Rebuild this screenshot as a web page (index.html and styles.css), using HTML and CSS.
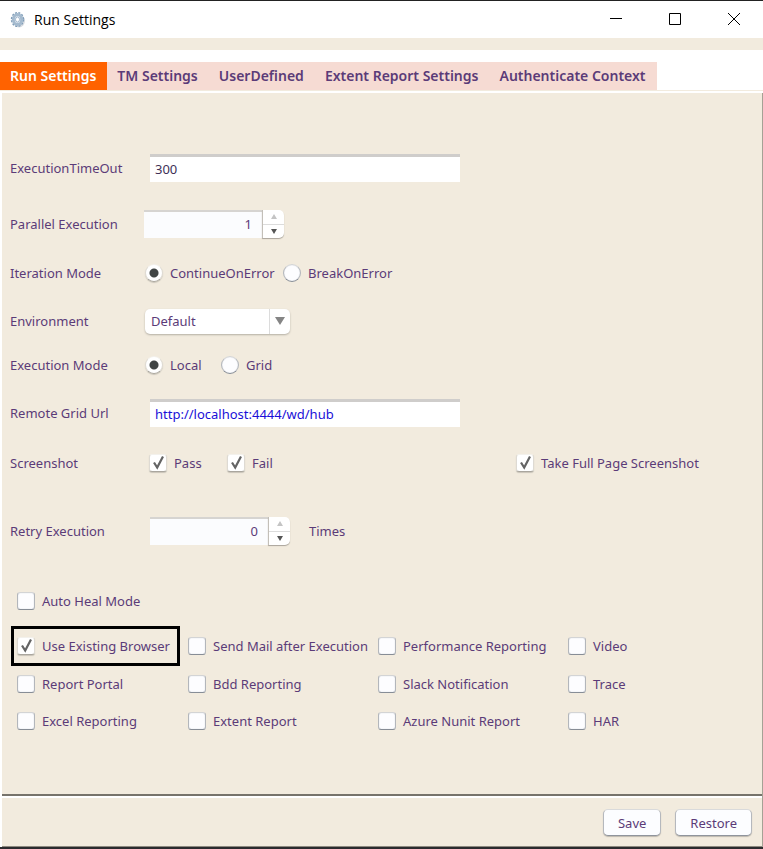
FILE: index.html
```html
<!DOCTYPE html>
<html lang="en">
<head>
<meta charset="utf-8">
<title>Run Settings</title>
<link rel="stylesheet" href="styles.css">
</head>
<body>
<div class="window">
  <header class="titlebar">
    <svg class="gear" viewBox="0 0 16 16" aria-hidden="true">
      <ellipse cx="9" cy="9" rx="6" ry="6.500" fill="#d9dde2"/>
      <ellipse cx="7.500" cy="7.500" rx="6" ry="6.800" fill="none" stroke="#7f9cb8" stroke-width="1.400" stroke-dasharray="2 1.400"/>
      <ellipse cx="7.500" cy="7.500" rx="4.200" ry="5" fill="#e9eff5" stroke="#a4bace" stroke-width="3"/>
      <ellipse cx="7.500" cy="7.500" rx="2" ry="2.600" fill="#fff" stroke="#8ba6c0" stroke-width=".8"/>
    </svg>
    <h1>Run Settings</h1>
    <div class="window-controls">
      <button type="button" aria-label="Minimize"><svg viewBox="0 0 12 12"><path d="M0 5.500h12"/></svg></button>
      <button type="button" aria-label="Maximize"><svg viewBox="0 0 12 12"><path d="M.5.5h11v11H.5z"/></svg></button>
      <button type="button" aria-label="Close"><svg viewBox="0 0 12 12"><path d="M0 0l12 12M12 0L0 12"/></svg></button>
    </div>
  </header>
  <div class="toolbar"></div>
  <nav class="tabs" role="tablist">
    <button type="button" role="tab" class="tab active" aria-selected="true">Run Settings</button>
    <button type="button" role="tab" class="tab">TM Settings</button>
    <button type="button" role="tab" class="tab">UserDefined</button>
    <button type="button" role="tab" class="tab">Extent Report Settings</button>
    <button type="button" role="tab" class="tab">Authenticate Context</button>
  </nav>
  <form class="form">
    <main class="panel">
      <div class="fields">
        <div class="row">
          <label class="name" for="timeout">ExecutionTimeOut</label>
          <input class="text indent" id="timeout" type="text" value="300">
        </div>
        <div class="row">
          <label class="name" for="parallel">Parallel Execution</label>
          <span class="spinner">
            <input id="parallel" type="text" inputmode="numeric" value="1">
            <span class="steps">
              <button type="button" aria-label="Increase"><svg class="off" viewBox="0 0 6 5"><path d="M0 5L3 0l3 5z"/></svg></button>
              <button type="button" aria-label="Decrease"><svg viewBox="0 0 6 5"><path d="M0 0h6L3 5z"/></svg></button>
            </span>
          </span>
        </div>
        <div class="row">
          <span class="name">Iteration Mode</span>
          <div class="radios">
            <label class="choice"><input type="radio" name="iteration" checked>ContinueOnError</label>
            <label class="choice"><input type="radio" name="iteration">BreakOnError</label>
          </div>
        </div>
        <div class="row">
          <label class="name" for="environment">Environment</label>
          <span class="select">
            <select id="environment"><option>Default</option></select>
            <svg viewBox="0 0 10 8" aria-hidden="true"><path d="M0 0h10L5 8z"/></svg>
          </span>
        </div>
        <div class="row">
          <span class="name">Execution Mode</span>
          <div class="radios short">
            <label class="choice"><input type="radio" name="execution" checked>Local</label>
            <label class="choice"><input type="radio" name="execution">Grid</label>
          </div>
        </div>
        <div class="row">
          <label class="name" for="url">Remote Grid Url</label>
          <input class="text indent url" id="url" type="text" value="http://localhost:4444/wd/hub">
        </div>
        <div class="row">
          <span class="name">Screenshot</span>
          <div class="shots">
            <label class="choice"><input type="checkbox" checked>Pass</label>
            <label class="choice"><input type="checkbox" checked>Fail</label>
            <label class="choice"><input type="checkbox" checked>Take Full Page Screenshot</label>
          </div>
        </div>
        <div class="row">
          <label class="name" for="retry">Retry Execution</label>
          <span class="spinner indent">
            <input id="retry" type="text" inputmode="numeric" value="0">
            <span class="steps">
              <button type="button" aria-label="Increase"><svg class="off" viewBox="0 0 6 5"><path d="M0 5L3 0l3 5z"/></svg></button>
              <button type="button" aria-label="Decrease"><svg viewBox="0 0 6 5"><path d="M0 0h6L3 5z"/></svg></button>
            </span>
          </span>
          <span class="unit">Times</span>
        </div>
      </div>
      <div class="options">
        <label class="choice wide"><input type="checkbox">Auto Heal Mode</label>
        <label class="choice marked"><input type="checkbox" checked>Use Existing Browser</label>
        <label class="choice"><input type="checkbox">Send Mail after Execution</label>
        <label class="choice"><input type="checkbox">Performance Reporting</label>
        <label class="choice"><input type="checkbox">Video</label>
        <label class="choice"><input type="checkbox">Report Portal</label>
        <label class="choice"><input type="checkbox">Bdd Reporting</label>
        <label class="choice"><input type="checkbox">Slack Notification</label>
        <label class="choice"><input type="checkbox">Trace</label>
        <label class="choice"><input type="checkbox">Excel Reporting</label>
        <label class="choice"><input type="checkbox">Extent Report</label>
        <label class="choice"><input type="checkbox">Azure Nunit Report</label>
        <label class="choice"><input type="checkbox">HAR</label>
      </div>
    </main>
    <footer class="actions">
      <button type="button">Save</button>
      <button type="button">Restore</button>
    </footer>
  </form>
</div>
</body>
</html>
```
FILE: styles.css
```css
* { box-sizing: border-box; }

body {
  margin: 0;
  background: #fff;
  color: #5b3b78;
  font: 13px/20px "Noto Sans", "Open Sans", sans-serif;
}

button, input, select { font: inherit; color: inherit; margin: 0; }
button { padding: 0; border: 0; background: none; }

.window {
  display: flex;
  flex-direction: column;
  min-height: 100vh;
  border-top: 1px solid #222;
  border-bottom: 2px solid #2b2b2e;
}

.titlebar {
  display: flex;
  align-items: center;
  height: 37px;
  padding-left: 10px;
}
.gear { width: 16px; height: 16px; margin-right: 8px; }
.titlebar h1 {
  flex: 1;
  margin: 0;
  color: #000;
  font: 14px/20px "Open Sans", sans-serif;
}
.window-controls { display: flex; }
.window-controls button {
  display: grid;
  place-items: center;
  width: 59px;
  height: 37px;
  padding-bottom: 1px;
}
.window-controls svg { width: 12px; height: 12px; fill: none; stroke: #000; overflow: visible; }

.toolbar { height: 12px; background: #f2ebde; }

.tabs {
  display: flex;
  margin-top: 12px;
  border-bottom: 1px solid #f2ebde;
}
.tab {
  height: 28px;
  padding: 0 11px 0 10px;
  background: #f6dbd3;
  font-size: 14px;
  font-weight: 600;
  white-space: nowrap;
}
.tab.active { background: #ff6200; color: #fff; }

.form {
  flex: 1;
  display: flex;
  flex-direction: column;
  margin-top: 2px;
  border-left: 2px solid #fff;
  border-right: 1px solid #a5a195;
}
.panel {
  flex: 1;
  padding: 47px 8px 0;
  background: #f2ebde;
}

.fields {
  display: grid;
  grid-template-rows: 56px 56px 42px 54px 34px 62px 38px 98px;
}
.row { display: flex; align-items: center; }
.name { flex: none; width: 134px; }
.indent { margin-left: 6px; }

.text {
  width: 310px;
  height: 28px;
  padding: 0 5px 2px;
  border: 0;
  border-top: 3px solid #cfcdcb;
  background: #fff;
  color: #3e2f56;
}
.text.url { color: #1a0fd8; }

.spinner { display: flex; width: 140px; height: 28px; }
.spinner input {
  flex: 1;
  min-width: 0;
  padding: 0 10px 2px;
  border: 0;
  border-top: 2px solid #d6d4d1;
  background: #fbfcfe;
  text-align: right;
}
.steps {
  display: flex;
  flex-direction: column;
  width: 22px;
  border-left: 1px solid #c3bfb8;
  border-radius: 0 5px 5px 0;
  background: #fff;
  box-shadow: 0 1px 1px #a9a49b;
}
.steps button { flex: 1; display: grid; place-items: center; }
.steps button + button { border-top: 1px solid #dcdcdc; }
.steps svg { width: 6px; height: 5px; fill: #555; }
.steps .off { fill: #c4c4c4; }
.unit { margin-left: 19px; }

.choice { display: flex; align-items: center; gap: 7px; white-space: nowrap; }
.choice input {
  appearance: none;
  flex: none;
  width: 18px;
  height: 18px;
  border: 1px solid #b3b6bb;
  border-top-color: #d3d4d5;
  border-bottom-color: #878d96;
  border-radius: 3px;
  background: #fdfdff;
  box-shadow: inset 0 0 1px #b9bdc4;
}
.choice input[type="radio"] { border-radius: 50%; }
.choice input:checked {
  border-color: #f3f1ec #dedad3 #aaa69e;
  background: #fff;
  box-shadow: 0 1px 1px #c9c4b9;
}
.choice input[type="radio"]:checked {
  background: radial-gradient(circle, #414545 4px, #fff 5px);
}
.choice input[type="checkbox"]:checked {
  background: #fff url("data:image/svg+xml,%3Csvg xmlns='http://www.w3.org/2000/svg' viewBox='0 0 16 16'%3E%3Cpath d='M4 7.500L7.200 12.500L13 1.500' fill='none' stroke='%23646464' stroke-width='2.200'/%3E%3C/svg%3E") center / 16px 16px;
}

.radios {
  display: grid;
  grid-template-columns: 138px auto;
  margin-left: 1px;
}
.radios.short { grid-template-columns: 76px auto; }

.select { position: relative; width: 145px; margin-left: 1px; }
.select select {
  appearance: none;
  display: block;
  width: 100%;
  height: 25px;
  padding: 0 26px 0 6px;
  border: 0;
  border-radius: 5px;
  background: linear-gradient(#dcdcdc, #dcdcdc) right 20px top / 1px 100% no-repeat #fff;
  box-shadow: 0 1px 2px #b4afa5;
}
.select svg {
  position: absolute;
  top: 8px;
  right: 5px;
  width: 10px;
  height: 8px;
  fill: #858585;
  pointer-events: none;
}

.shots {
  display: grid;
  grid-template-columns: 78px 289px auto;
  margin-left: 5px;
}

.options {
  display: grid;
  grid-template-columns: 171px 190px 190px auto;
  grid-template-rows: 42px 48px 28px 46px;
  padding-left: 7px;
}
.options .choice { position: relative; justify-self: start; }
.wide { grid-column: 1 / -1; }
.marked::after {
  content: "";
  position: absolute;
  inset: 4px -10px 4px -6px;
  border: 3px solid #000;
  pointer-events: none;
}

.actions {
  display: flex;
  justify-content: flex-end;
  gap: 14px;
  padding: 13px 10px 10px;
  border-top: 2px solid #77736b;
  border-bottom: 1px solid #8d897f;
  background: #f2ebde;
  box-shadow: inset 0 2px #fff;
}
.actions button {
  height: 27px;
  padding: 0 14px;
  border: 1px solid #b5b8bd;
  border-top-color: #d9dadb;
  border-bottom-color: #8f949c;
  border-radius: 5px;
  background: #fcfdff;
  box-shadow: 0 1px 1px #bdb8ae;
}
```
